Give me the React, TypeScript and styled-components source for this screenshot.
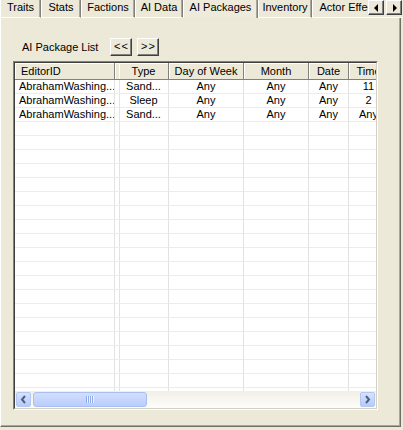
import React from 'react'
import styled, { createGlobalStyle } from 'styled-components'

const GlobalStyle = createGlobalStyle`
  html, body {
    margin: 0;
    padding: 0;
    background: #ece9d8;
  }
  body {
    font-family: 'Liberation Sans', Arial, sans-serif;
    font-size: 11px;
    color: #000;
  }
`

const Window = styled.div`
  width: 403px;
  height: 430px;
  display: flex;
  flex-direction: column;
  overflow: hidden;
  background: #ece9d8;
`

const TabRow = styled.div`
  display: flex;
  height: 18px;
  flex-shrink: 0;
`

const TabStrip = styled.div`
  display: flex;
  flex: 1;
  min-width: 0;
  overflow: hidden;
`

const Tab = styled.div<{ $width: number; $active?: boolean }>`
  flex: 0 0 ${p => p.$width}px;
  box-sizing: border-box;
  height: 18px;
  line-height: 15px;
  text-align: center;
  white-space: nowrap;
  overflow: hidden;
  border-left: 1px solid #fff;
  border-right: 1px solid #808080;
  box-shadow: inset -1px 0 #aca899;
  border-bottom: ${p => (p.$active ? 'none' : '1px solid #fff')};
  background: ${p => (p.$active ? '#eeebdc' : '#ece9d8')};
`

const ArrowGroup = styled.div`
  display: flex;
  gap: 2px;
  width: 35px;
  flex-shrink: 0;
  box-sizing: border-box;
  height: 18px;
  border-bottom: 1px solid #fff;
`

const TabArrow = styled.div`
  width: 16px;
  height: 15px;
  box-sizing: border-box;
  display: flex;
  align-items: center;
  justify-content: center;
  background: #ece9d8;
  border-top: 1px solid #fff;
  border-left: 1px solid #fff;
  border-right: 1px solid #404040;
  border-bottom: 1px solid #404040;
  box-shadow: inset -1px -1px #808080;
`

const Triangle = styled.span<{ $dir: 'left' | 'right' }>`
  width: 0;
  height: 0;
  border-top: 4px solid transparent;
  border-bottom: 4px solid transparent;
  ${p =>
    p.$dir === 'left'
      ? 'border-right: 4px solid #000; margin-right: 1px;'
      : 'border-left: 4px solid #000; margin-left: 1px;'}
`

const Panel = styled.div`
  width: 401px;
  height: 409px;
  flex-shrink: 0;
  box-sizing: border-box;
  border-left: 1px solid #fff;
  border-right: 1px solid #716f64;
  border-bottom: 1px solid #716f64;
  box-shadow: inset -1px -1px #aca899;
  padding: 20px 0 0 12px;
  display: flex;
  flex-direction: column;
`

const Toolbar = styled.div`
  display: flex;
  align-items: center;
  height: 18px;
  padding-left: 9px;
  gap: 5px;
`

const ToolLabel = styled.span`
  margin-right: 7px;
  white-space: nowrap;
`

const PushButton = styled.div`
  width: 22px;
  height: 18px;
  box-sizing: border-box;
  background: #ece9d8;
  border-top: 1px solid #fff;
  border-left: 1px solid #fff;
  border-right: 1px solid #404040;
  border-bottom: 1px solid #404040;
  box-shadow: inset -1px -1px #808080;
  line-height: 15px;
  text-align: center;
  letter-spacing: 1px;
`

const ListOuter = styled.div`
  margin-top: 5px;
  width: 365px;
  height: 349px;
  box-sizing: border-box;
  border: 1px solid;
  border-color: #808080 #fff #fff #808080;
  display: flex;
`

const ListInner = styled.div`
  flex: 1;
  min-width: 0;
  border: 1px solid;
  border-color: #404040 #d4d0c8 #d4d0c8 #404040;
  background: #fff;
  display: flex;
  flex-direction: column;
  overflow: hidden;
`

type Col = { title: string; width: number; align: 'left' | 'center' }

const columns: Col[] = [
  { title: 'EditorID', width: 100, align: 'left' },
  { title: '', width: 4, align: 'left' },
  { title: 'Type', width: 50, align: 'center' },
  { title: 'Day of Week', width: 75, align: 'center' },
  { title: 'Month', width: 65, align: 'center' },
  { title: 'Date', width: 40, align: 'center' },
  { title: 'Time', width: 40, align: 'center' }
]

const template = columns.map(c => `${c.width}px`).join(' ')

const HeaderRow = styled.div`
  display: grid;
  grid-template-columns: ${template};
  height: 17px;
  flex-shrink: 0;
`

const HeaderCell = styled.div<{ $align: string }>`
  box-sizing: border-box;
  background: #ece9d8;
  border-right: 1px solid #808080;
  border-bottom: 1px solid #808080;
  box-shadow: inset 1px 1px #fff;
  line-height: 16px;
  text-align: ${p => p.$align};
  padding: ${p => (p.$align === 'left' ? '0 0 0 6px' : '0')};
  white-space: nowrap;
  overflow: hidden;
`

const Body = styled.div`
  flex: 1;
  overflow: hidden;
`

const Row = styled.div`
  display: grid;
  grid-template-columns: ${template};
  height: 14px;
`

const Cell = styled.div<{ $align: string }>`
  box-sizing: border-box;
  border-right: 1px solid #e2e2e2;
  border-bottom: 1px solid #ececec;
  line-height: 13px;
  text-align: ${p => p.$align};
  padding: ${p => (p.$align === 'left' ? '0 0 0 4px' : '0')};
  white-space: nowrap;
  overflow: hidden;
`

const HScroll = styled.div`
  height: 17px;
  flex-shrink: 0;
  display: flex;
  align-items: center;
  padding: 0 1px;
  background: linear-gradient(to bottom, #f1efe6, #fdfdfa);
`

const ScrollArrow = styled.div`
  width: 15px;
  height: 15px;
  box-sizing: border-box;
  border-radius: 2px;
  border: 1px solid #b4c7f4;
  background: linear-gradient(to bottom, #d6e2fe, #b7cbf9);
  display: flex;
  align-items: center;
  justify-content: center;
  flex-shrink: 0;
`

const Thumb = styled.div`
  margin-left: 2px;
  width: 114px;
  height: 15px;
  box-sizing: border-box;
  border-radius: 3px;
  border: 1px solid #a9bff3;
  background: linear-gradient(to bottom, #d2dffd, #bacdfb);
  display: flex;
  align-items: center;
  justify-content: center;
`

const Grip = styled.span`
  width: 8px;
  height: 7px;
  background: repeating-linear-gradient(to right, #8eaaeb 0 1px, #eef3ff 1px 2px);
`

const Track = styled.div`
  flex: 1;
`

const Chevron = ({ dir }: { dir: 'left' | 'right' }) => (
  <svg width='7' height='9' viewBox='0 0 7 9'>
    <polyline
      points={dir === 'left' ? '5,1 2,4.5 5,8' : '2,1 5,4.5 2,8'}
      fill='none'
      stroke='#4d6185'
      strokeWidth='2'
    />
  </svg>
)

const tabs = [
  { name: 'Traits', width: 41 },
  { name: 'Stats', width: 40 },
  { name: 'Factions', width: 54 },
  { name: 'AI Data', width: 48 },
  { name: 'AI Packages', width: 75, active: true },
  { name: 'Inventory', width: 54 },
  { name: 'Actor Effects', width: 77 }
]

const data = [
  ['AbrahamWashing...', '', 'Sand...', 'Any', 'Any', 'Any', '11'],
  ['AbrahamWashing...', '', 'Sleep', 'Any', 'Any', 'Any', '2'],
  ['AbrahamWashing...', '', 'Sand...', 'Any', 'Any', 'Any', 'Any']
]

const rows = [...data, ...Array.from({ length: 20 }, () => columns.map(() => ''))]

export default function App() {
  return (
    <>
      <GlobalStyle />
      <Window>
        <TabRow>
          <TabStrip>
            {tabs.map(t => (
              <Tab key={t.name} $width={t.width} $active={t.active}>
                {t.name}
              </Tab>
            ))}
          </TabStrip>
          <ArrowGroup>
            <TabArrow>
              <Triangle $dir='left' />
            </TabArrow>
            <TabArrow>
              <Triangle $dir='right' />
            </TabArrow>
          </ArrowGroup>
        </TabRow>
        <Panel>
          <Toolbar>
            <ToolLabel>AI Package List</ToolLabel>
            <PushButton>&lt;&lt;</PushButton>
            <PushButton>&gt;&gt;</PushButton>
          </Toolbar>
          <ListOuter>
            <ListInner>
              <HeaderRow>
                {columns.map((c, i) => (
                  <HeaderCell key={i} $align={c.align}>
                    {c.title}
                  </HeaderCell>
                ))}
              </HeaderRow>
              <Body>
                {rows.map((r, ri) => (
                  <Row key={ri}>
                    {r.map((v, ci) => (
                      <Cell key={ci} $align={columns[ci].align}>
                        {v}
                      </Cell>
                    ))}
                  </Row>
                ))}
              </Body>
              <HScroll>
                <ScrollArrow>
                  <Chevron dir='left' />
                </ScrollArrow>
                <Thumb>
                  <Grip />
                </Thumb>
                <Track />
                <ScrollArrow>
                  <Chevron dir='right' />
                </ScrollArrow>
              </HScroll>
            </ListInner>
          </ListOuter>
        </Panel>
      </Window>
    </>
  )
}
